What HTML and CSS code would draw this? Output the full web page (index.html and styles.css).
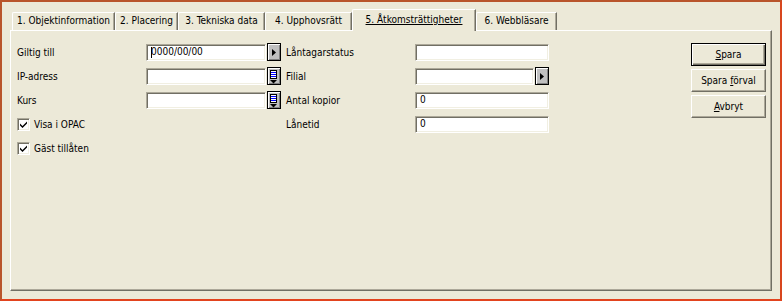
FILE: index.html
```html
<!DOCTYPE html>
<html lang="sv">
<head>
<meta charset="UTF-8">
<title>Åtkomsträttigheter</title>
<link rel="stylesheet" href="styles.css">
</head>
<body>

  <div class="window">

    <!-- Flikar -->
    <div class="tabs">
      <div class="tab">1. Objektinformation</div>
      <div class="tab">2. Placering</div>
      <div class="tab">3. Tekniska data</div>
      <div class="tab">4. Upphovsrätt</div>
      <div class="tab active"><u>5. Åtkomsträttigheter</u></div>
      <div class="tab">6. Webbläsare</div>
    </div>

    <div class="panel">

      <div class="col">
        <div class="row">
          <span class="label">Giltig till</span>
          <div class="field has-caret">0000/00/00</div>
          <span class="pick">
            <svg width="14" height="17" viewBox="0 0 14 17"><path d="M5 5 L9 8.5 L5 12 Z" fill="#000"/></svg>
          </span>
        </div>
        <div class="row">
          <span class="label">IP-adress</span>
          <div class="field"></div>
          <span class="pick">
            <svg width="14" height="17" viewBox="0 0 14 17">
              <rect x="3.5" y="2.5" width="6" height="8" fill="#fff" stroke="#000"/>
              <path d="M4 4.5 H9 M4 6.5 H9 M4 8.5 H9" stroke="#0000ff"/>
              <path d="M3 12 H10 L6.5 15.5 Z" fill="#000"/>
            </svg>
          </span>
        </div>
        <div class="row">
          <span class="label">Kurs</span>
          <div class="field"></div>
          <span class="pick">
            <svg width="14" height="17" viewBox="0 0 14 17">
              <rect x="3.5" y="2.5" width="6" height="8" fill="#fff" stroke="#000"/>
              <path d="M4 4.5 H9 M4 6.5 H9 M4 8.5 H9" stroke="#0000ff"/>
              <path d="M3 12 H10 L6.5 15.5 Z" fill="#000"/>
            </svg>
          </span>
        </div>
        <div class="row">
          <label class="check">
            <span class="box"><svg width="11" height="11" viewBox="0 0 11 11"><path d="M2 4.5 L4.5 7 L9 2.5 V4.5 L4.5 9 L2 6.5 Z" fill="#000"/></svg></span>
            Visa i OPAC
          </label>
        </div>
        <div class="row">
          <label class="check">
            <span class="box"><svg width="11" height="11" viewBox="0 0 11 11"><path d="M2 4.5 L4.5 7 L9 2.5 V4.5 L4.5 9 L2 6.5 Z" fill="#000"/></svg></span>
            Gäst tillåten
          </label>
        </div>
      </div>

      <div class="col col-mid">
        <div class="row">
          <span class="label">Låntagarstatus</span>
          <div class="field wide"></div>
        </div>
        <div class="row">
          <span class="label">Filial</span>
          <div class="field short"></div>
          <span class="pick">
            <svg width="14" height="17" viewBox="0 0 14 17"><path d="M5 5 L9 8.5 L5 12 Z" fill="#000"/></svg>
          </span>
        </div>
        <div class="row">
          <span class="label">Antal kopior</span>
          <div class="field wide">0</div>
        </div>
        <div class="row">
          <span class="label">Lånetid</span>
          <div class="field wide">0</div>
        </div>
      </div>

      <div class="actions">
        <button class="btn default"><u>S</u>para</button>
        <button class="btn">Spara <u>f</u>örval</button>
        <button class="btn"><u>A</u>vbryt</button>
      </div>

    </div>
  </div>

</body>
</html>
```

FILE: styles.css
```css
  body {
      margin: 0;
      background-color: #ece9d8;
      font-family: "DejaVu Sans Condensed", "DejaVu Sans", sans-serif;
      font-stretch: condensed;
      font-size: 10px;
      color: #000;
  }

  /* Fönstret med orange ram */
  .window {
      display: flex;
      flex-direction: column;
      box-sizing: border-box;
      width: 782px;
      height: 301px;
      padding: 7px 8px 8px 8px;
      border: 2px solid #b9552b;
      border-right-color: #d8461e;
      border-bottom-color: #e2431e;
      background-color: #ece9d8;
  }

  /* Flikraden */
  .tabs {
      display: flex;
      align-items: flex-end;
      height: 21px;
      padding-left: 2px;
  }

  .tab {
      box-sizing: border-box;
      height: 18px;
      line-height: 16px;
      text-align: center;
      white-space: nowrap;
      border-top: 1px solid #fff;
      border-left: 1px solid #fff;
      border-right: 1px solid #716f64;
      border-top-left-radius: 2px;
      box-shadow: inset -1px 0 #aca899;
  }

  .tab:nth-child(1) { width: 103px; }
  .tab:nth-child(2) { width: 63px; }
  .tab:nth-child(3) { width: 87px; }
  .tab:nth-child(4) { width: 87px; }
  .tab:nth-child(5) { width: 124px; }
  .tab:nth-child(6) { width: 81px; }

  /* Aktiv flik ligger över panelens kant */
  .tab.active {
      position: relative;
      z-index: 1;
      height: 22px;
      line-height: 20px;
      margin-bottom: -1px;
      background-color: #ece9d8;
  }

  /* Panelen under flikarna */
  .panel {
      flex: 1;
      display: flex;
      align-items: flex-start;
      padding: 13px 5px 0 6px;
      border-top: 1px solid #fff;
      border-left: 1px solid #fff;
      border-right: 1px solid #716f64;
      border-bottom: 1px solid #716f64;
      box-shadow: inset -1px -1px #aca899;
  }

  .col {
      display: flex;
      flex-direction: column;
  }

  .col-mid {
      margin-left: 5px;
  }

  .row {
      display: flex;
      align-items: flex-start;
      height: 24px;
  }

  .label {
      width: 129px;
      line-height: 17px;
  }

  /* Textfält, nedsänkta */
  .field {
      position: relative;
      box-sizing: border-box;
      width: 120px;
      height: 17px;
      padding-left: 4px;
      line-height: 13px;
      background-color: #fff;
      border-top: 1px solid #aca899;
      border-left: 1px solid #aca899;
      border-right: 1px solid #fff;
      border-bottom: 1px solid #fff;
      box-shadow: inset 1px 1px #716f64, inset -1px -1px #f1efe2;
  }

  .field.wide {
      width: 134px;
  }

  .field.short {
      width: 119px;
  }

  /* Markör i första fältet */
  .field.has-caret::before {
      content: "";
      position: absolute;
      left: 4px;
      top: 2px;
      width: 1px;
      height: 11px;
      background-color: #000;
  }

  /* Små knappar bredvid fälten */
  .pick {
      display: block;
      box-sizing: border-box;
      width: 14px;
      height: 18px;
      margin-top: -1px;
      margin-left: 1px;
      background-color: #c0c0c0;
      border: 1px solid #000;
      box-shadow: inset 1px 1px #fff, inset -1px -1px #808080;
  }

  .pick svg {
      display: block;
      margin: 0 -1px;
  }

  /* Kryssrutor */
  .check {
      display: flex;
      align-items: center;
      gap: 4px;
      height: 17px;
      line-height: 17px;
  }

  .box {
      display: block;
      box-sizing: border-box;
      width: 13px;
      height: 13px;
      background-color: #fff;
      border-top: 1px solid #aca899;
      border-left: 1px solid #aca899;
      border-right: 1px solid #fff;
      border-bottom: 1px solid #fff;
      box-shadow: inset 1px 1px #716f64, inset -1px -1px #f1efe2;
  }

  .box svg {
      display: block;
  }

  /* Knappar till höger */
  .actions {
      display: flex;
      flex-direction: column;
      gap: 3px;
      margin-left: auto;
      margin-top: -1px;
  }

  .btn {
      box-sizing: border-box;
      width: 75px;
      height: 23px;
      padding: 0;
      font: inherit;
      color: #000;
      background-color: #ece9d8;
      border-top: 1px solid #fff;
      border-left: 1px solid #fff;
      border-right: 1px solid #716f64;
      border-bottom: 1px solid #716f64;
      box-shadow: inset -1px -1px #aca899;
  }

  .btn.default {
      border: 1px solid #000;
      box-shadow: inset 1px 1px #fff, inset -1px -1px #716f64, inset -2px -2px #aca899;
  }
```
